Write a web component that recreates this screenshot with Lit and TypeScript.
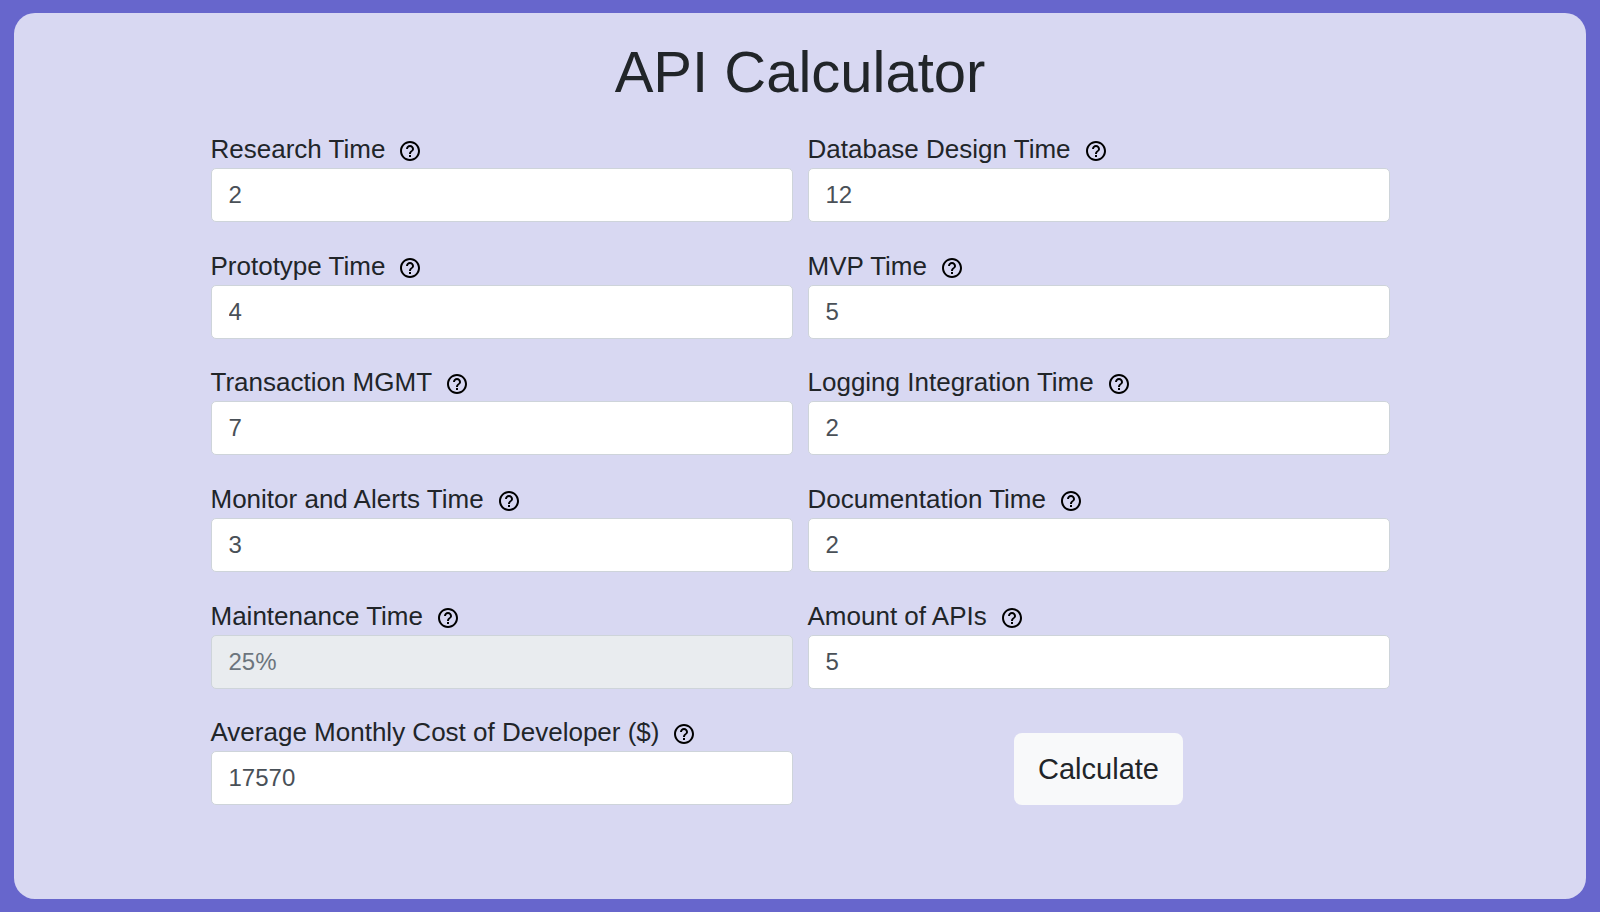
import { LitElement, html, css } from "lit";
import { customElement, property, state } from "lit/decorators.js";

interface Field {
  id: string;
  label: string;
  value: string;
  placeholder?: string;
  disabled?: boolean;
}

const FIELDS: Field[] = [
  { id: "research", label: "Research Time", value: "2" },
  { id: "database", label: "Database Design Time", value: "12" },
  { id: "prototype", label: "Prototype Time", value: "4" },
  { id: "mvp", label: "MVP Time", value: "5" },
  { id: "transaction", label: "Transaction MGMT", value: "7" },
  { id: "logging", label: "Logging Integration Time", value: "2" },
  { id: "monitor", label: "Monitor and Alerts Time", value: "3" },
  { id: "documentation", label: "Documentation Time", value: "2" },
  { id: "maintenance", label: "Maintenance Time", value: "", placeholder: "25%", disabled: true },
  { id: "amount", label: "Amount of APIs", value: "5" },
  { id: "cost", label: "Average Monthly Cost of Developer ($)", value: "17570" },
];

@customElement("number-field")
class NumberField extends LitElement {
  @property({ attribute: false }) field!: Field;

  static styles = css`
    :host {
      display: block;
      min-width: 0;
    }
    .head {
      display: flex;
      align-items: center;
      gap: 13px;
      height: 34px;
    }
    .label {
      font-size: 26px;
      line-height: 30px;
      padding-bottom: 4px;
    }
    .help {
      display: flex;
      padding: 0;
      border: 0;
      background: none;
      color: #000;
      cursor: pointer;
    }
    .icon {
      width: 24px;
      height: 24px;
      fill: currentColor;
    }
    .input {
      display: block;
      box-sizing: border-box;
      width: 100%;
      height: 54px;
      padding: 0 17px;
      border: 1px solid #ced4da;
      border-radius: 5px;
      background: #fff;
      color: #495057;
      font: inherit;
      font-size: 24px;
      appearance: textfield;
    }
    .input::placeholder {
      color: #6c757d;
      opacity: 1;
    }
    .input:disabled {
      background: #e9ecef;
    }
  `;

  render() {
    const f = this.field;
    return html`
      <div class="head">
        <label class="label" for=${f.id}>${f.label}</label>
        <button class="help" type="button" aria-label="About ${f.label}">
          <svg class="icon" viewBox="0 0 24 24" aria-hidden="true">
            <path
              d="M11 18h2v-2h-2v2zm1-16C6.48 2 2 6.48 2 12s4.48 10 10 10 10-4.48 10-10S17.52 2 12 2zm0 18c-4.41 0-8-3.59-8-8s3.59-8 8-8 8 3.59 8 8-3.59 8-8 8zm0-14c-2.21 0-4 1.79-4 4h2c0-1.1.9-2 2-2s2 .9 2 2c0 2-3 1.75-3 5h2c0-2.25 3-2.5 3-5 0-2.21-1.79-4-4-4z"
            />
          </svg>
        </button>
      </div>
      <input
        class="input"
        id=${f.id}
        type="number"
        .value=${f.value}
        placeholder=${f.placeholder ?? ""}
        ?disabled=${f.disabled ?? false}
      />
    `;
  }
}

@customElement("app-root")
class AppRoot extends LitElement {
  @state() private fields = FIELDS;

  static styles = css`
    :host {
      display: flex;
      box-sizing: border-box;
      min-height: 100vh;
      padding: 13px 14px;
      background: #6766cc;
      color: #212529;
      font-family: "Liberation Sans", Arial, sans-serif;
    }
    .card {
      flex: 1;
      display: flex;
      flex-direction: column;
      align-items: center;
      box-sizing: border-box;
      padding: 24px 0 65px;
      border-radius: 21px;
      background: #d8d8f2;
    }
    .title {
      margin: 0 0 27px;
      font-size: 58px;
      font-weight: 400;
      line-height: 70px;
    }
    .form {
      flex: 1;
      display: grid;
      grid-template-columns: 1fr 1fr;
      grid-auto-rows: 1fr;
      column-gap: 15px;
      width: 75%;
    }
    .actions {
      display: flex;
      justify-content: center;
      align-items: flex-start;
      padding-top: 16px;
    }
    .submit {
      height: 72px;
      padding: 0 24px;
      border: 0;
      border-radius: 8px;
      background: #f8f9fa;
      color: #212529;
      font: inherit;
      font-size: 29px;
      cursor: pointer;
    }
  `;

  render() {
    return html`
      <main class="card">
        <h1 class="title">API Calculator</h1>
        <form class="form" @submit=${(e: Event) => e.preventDefault()}>
          ${this.fields.map((f) => html`<number-field .field=${f}></number-field>`)}
          <div class="actions">
            <button class="submit" type="submit">Calculate</button>
          </div>
        </form>
      </main>
    `;
  }
}
